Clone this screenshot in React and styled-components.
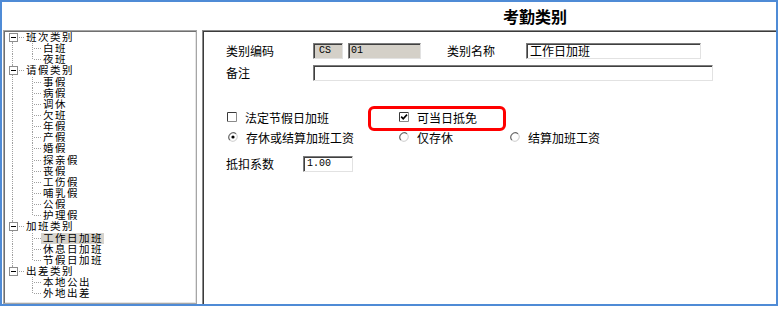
import React from "react";
import styled, { createGlobalStyle, css } from "styled-components";

const GlobalStyle = createGlobalStyle`
  html, body { margin: 0; padding: 0; background: #fff; }
  body { font-family: "Noto Sans CJK SC", "Noto Sans", sans-serif; color: #000; }
`;

const LINE = "#a0a0a0";
const vDots = `repeating-linear-gradient(to bottom, ${LINE} 0 1px, transparent 1px 2px)`;
const hDots = `repeating-linear-gradient(to right, ${LINE} 0 1px, transparent 1px 2px)`;

const Page = styled.div`
  width: 779px;
  height: 313px;
  background: #fff;
`;

const Window = styled.div`
  width: 778px;
  height: 306px;
  box-sizing: border-box;
  border: 2px solid #4f8bd6;
  display: flex;
  flex-direction: column;
  background: #fff;
`;

const Header = styled.div`
  height: 28px;
  flex: none;
  display: flex;
  align-items: center;
  padding-left: 501px;
  font-family: "Noto Sans CJK SC", sans-serif;
  font-weight: bold;
  font-size: 16px;
`;

const Body = styled.div`
  flex: 1;
  min-height: 0;
  display: flex;
  gap: 5px;
  padding-left: 1px;
`;

const TreePanel = styled.div`
  width: 194px;
  flex: none;
  box-sizing: border-box;
  border: 1px solid #a6a6a6;
  box-shadow: inset 1px 1px 0 #707070, inset -1px -1px 0 #e4e4e4;
  padding-top: 1px;
  overflow: hidden;
  font-family: "Liberation Sans", "Noto Sans CJK SC", sans-serif;
  font-size: 10.5px;
  letter-spacing: 1.5px;
`;

const TreeRow = styled.div`
  display: flex;
  align-items: center;
  height: 11.15px;
  white-space: nowrap;
`;

const RootGutter = styled.span`
  flex: none;
  width: 21px;
  height: 100%;
  display: flex;
  align-items: center;
  padding-left: 5px;
  box-sizing: border-box;
  background-repeat: no-repeat;
  ${(p) =>
    p.$first
      ? css`background-image: ${vDots}; background-size: 1px 50%; background-position: 8px 100%;`
      : p.$last
      ? css`background-image: ${vDots}; background-size: 1px 50%; background-position: 8px 0;`
      : css`background-image: ${vDots}; background-size: 1px 100%; background-position: 8px 0;`}
`;

const ExpandBox = styled.span`
  width: 9px;
  height: 9px;
  box-sizing: border-box;
  border: 1px solid #8c8c8c;
  background: #fff;
  position: relative;
  flex: none;
  &::after {
    content: "";
    position: absolute;
    left: 1px;
    right: 1px;
    top: 3px;
    height: 1px;
    background: #000;
  }
`;

const Dash = styled.span`
  flex: none;
  width: 6px;
  height: 1px;
  margin-left: 1px;
  background-image: ${hDots};
`;

const ChildGutter = styled.span`
  flex: none;
  width: 39px;
  height: 100%;
  background-repeat: no-repeat;
  background-image: ${(p) => (p.$rootLine ? `${vDots},` : "")} ${vDots}, ${hDots};
  background-size: ${(p) => (p.$rootLine ? "1px 100%," : "")} 1px ${(p) => (p.$last ? "50%" : "100%")}, 8px 1px;
  background-position: ${(p) => (p.$rootLine ? "8px 0," : "")} 28px 0, 30px 50%;
`;

const NodeLabel = styled.span`
  display: block;
  padding: 0 1px 0 2px;
  line-height: 11px;
  height: 11px;
  overflow: hidden;
  margin-left: ${(p) => (p.$root ? "-1px" : "-2px")};
  background: ${(p) => (p.$selected ? "#d6d3cd" : "transparent")};
`;

const FormPanel = styled.div`
  flex: 1;
  box-sizing: border-box;
  border-top: 1px solid #8a8a8a;
  border-left: 1px solid #8a8a8a;
  box-shadow: inset 1px 1px 0 #3c3c3c;
  padding: 12px 0 0 23px;
  font-size: 12px;
`;

const FieldRow = styled.div`
  display: flex;
  align-items: center;
  height: 16px;
  margin-bottom: 6px;
`;

const Label = styled.span`
  flex: none;
  width: ${(p) => p.$w}px;
  margin-left: ${(p) => p.$ml || 0}px;
  white-space: nowrap;
  line-height: 16px;
`;

const Field = styled.div`
  flex: none;
  box-sizing: border-box;
  width: ${(p) => p.$w}px;
  height: 16px;
  margin-left: ${(p) => p.$ml || 0}px;
  padding-left: ${(p) => p.$pl ?? 3}px;
  background: ${(p) => (p.$readonly ? "#d4d0c8" : "#fff")};
  border: 1px solid;
  border-color: #7c7c7c #e2e2e2 #e2e2e2 #7c7c7c;
  box-shadow: inset 1px 1px 0 #404040;
  display: flex;
  align-items: center;
  white-space: nowrap;
  font-size: ${(p) => (p.$mono ? "10px" : "12px")};
  font-family: ${(p) => (p.$mono ? '"Liberation Mono", monospace' : '"Noto Sans CJK SC", sans-serif')};
  line-height: 14px;
`;

const OptionGrid = styled.div`
  margin-top: 26px;
  display: grid;
  grid-template-columns: 142px 142px 1fr;
  grid-auto-rows: 20px;
`;

const Option = styled.div`
  display: flex;
  align-items: center;
  gap: 8px;
  height: 100%;
  padding-left: ${(p) => p.$pl || 0}px;
  white-space: nowrap;
  position: relative;
`;

const Highlight = styled.div`
  position: relative;
  &::after {
    content: "";
    position: absolute;
    left: 0;
    top: -1px;
    width: 138px;
    height: 25px;
    box-sizing: border-box;
    border: 3px solid #ff0000;
    border-radius: 6px;
    pointer-events: none;
  }
`;

const CoefRow = styled(FieldRow)`
  margin-top: 9px;
`;

function CheckBox({ checked }) {
  return (
    <svg width="10" height="10" viewBox="0 0 10 10" style={{ flex: "none" }}>
      <rect x="0" y="0" width="10" height="10" fill="#fff" />
      <path d="M0.5 9.5 V0.5 H9.5" stroke="#3a3a3a" strokeWidth="1" fill="none" />
      <path d="M9.5 0.5 V9.5 H0.5" stroke="#8a8a8a" strokeWidth="1" fill="none" />
      {checked && <path d="M2.2 4.6 L4.2 6.8 L8 2.6" stroke="#000" strokeWidth="1.6" fill="none" />}
    </svg>
  );
}

function Radio({ checked }) {
  return (
    <svg width="10" height="10" viewBox="0 0 10 10" style={{ flex: "none" }}>
      <circle cx="5" cy="5" r="4.4" fill="#fff" />
      <path d="M1.9 8.1 A4.4 4.4 0 0 1 8.1 1.9" stroke="#6a6a6a" strokeWidth="1.2" fill="none" />
      <path d="M8.1 1.9 A4.4 4.4 0 0 1 1.9 8.1" stroke="#d6d6d6" strokeWidth="1.2" fill="none" />
      {checked && <circle cx="5" cy="5" r="1.6" fill="#000" />}
    </svg>
  );
}

const tree = [
  { name: "班次类别", children: ["白班", "夜班"] },
  {
    name: "请假类别",
    children: ["事假", "病假", "调休", "欠班", "年假", "产假", "婚假", "探亲假", "丧假", "工伤假", "哺乳假", "公假", "护理假"],
  },
  { name: "加班类别", children: ["工作日加班", "休息日加班", "节假日加班"] },
  { name: "出差类别", children: ["本地公出", "外地出差"] },
];

export default function App() {
  return (
    <Page>
      <GlobalStyle />
      <Window>
        <Header>考勤类别</Header>
        <Body>
          <TreePanel>
            {tree.map((g, gi) => {
              const lastGroup = gi === tree.length - 1;
              return (
                <React.Fragment key={g.name}>
                  <TreeRow>
                    <RootGutter $first={gi === 0} $last={lastGroup}>
                      <ExpandBox />
                      <Dash />
                    </RootGutter>
                    <NodeLabel $root>{g.name}</NodeLabel>
                  </TreeRow>
                  {g.children.map((c, ci) => (
                    <TreeRow key={c}>
                      <ChildGutter $rootLine={!lastGroup} $last={ci === g.children.length - 1} />
                      <NodeLabel $selected={c === "工作日加班"}>{c}</NodeLabel>
                    </TreeRow>
                  ))}
                </React.Fragment>
              );
            })}
          </TreePanel>
          <FormPanel>
            <FieldRow>
              <Label $w={87}>类别编码</Label>
              <Field $w={30} $readonly $mono $pl={5}>CS</Field>
              <Field $w={73} $readonly $mono $pl={2} $ml={5}>01</Field>
              <Label $w={79} $ml={26}>类别名称</Label>
              <Field $w={175}>工作日加班</Field>
            </FieldRow>
            <FieldRow>
              <Label $w={87}>备注</Label>
              <Field $w={400} />
            </FieldRow>
            <OptionGrid>
              <Option $pl={1}>
                <CheckBox />
                <span>法定节假日加班</span>
              </Option>
              <Highlight>
                <Option $pl={31}>
                  <CheckBox checked />
                  <span>可当日抵免</span>
                </Option>
              </Highlight>
              <div />
              <Option $pl={2}>
                <Radio checked />
                <span>存休或结算加班工资</span>
              </Option>
              <Option $pl={31}>
                <Radio />
                <span>仅存休</span>
              </Option>
              <Option $pl={0}>
                <Radio />
                <span>结算加班工资</span>
              </Option>
            </OptionGrid>
            <CoefRow>
              <Label $w={77}>抵扣系数</Label>
              <Field $w={50} $mono>1.00</Field>
            </CoefRow>
          </FormPanel>
        </Body>
      </Window>
    </Page>
  );
}
